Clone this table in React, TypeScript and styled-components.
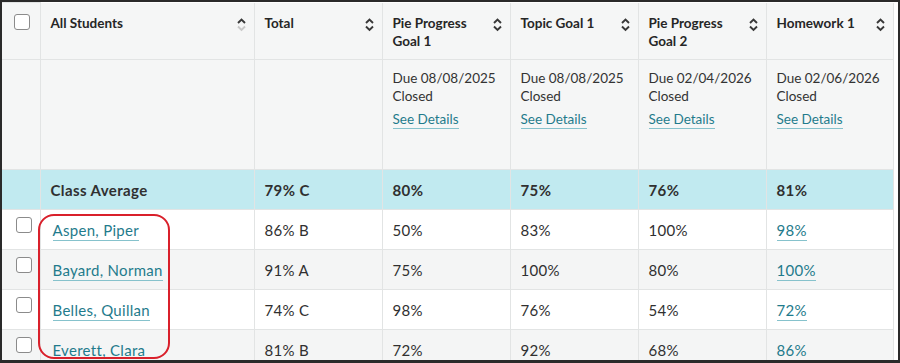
import React from 'react';
import styled, { createGlobalStyle } from 'styled-components';

const GlobalStyle = createGlobalStyle`
  body {
    margin: 0;
    background: #ffffff;
    font-family: Lato, "Open Sans", Arial, sans-serif;
    color: #2b2b2b;
  }
`;

const Frame = styled.div`
  position: relative;
  width: 900px;
  height: 363px;
  box-sizing: border-box;
  border: 2px solid #2a2a2a;
  border-bottom-width: 3px;
  overflow: hidden;
  background: #ffffff;
`;

const Table = styled.table`
  width: 891px;
  table-layout: fixed;
  border-collapse: collapse;
  font-size: 13.5px;
  line-height: 18px;
`;

const HeadRow = styled.tr<{ height: number }>`
  height: ${p => p.height}px;
  background: #f5f6f6;
`;

const BodyRow = styled.tr<{ tone: 'white' | 'grey' | 'average' }>`
  height: 40px;
  background: ${p => (p.tone === 'average' ? '#c1eaf0' : p.tone === 'grey' ? '#f4f5f5' : '#ffffff')};
  font-weight: ${p => (p.tone === 'average' ? 700 : 400)};
  font-size: 15px;
  letter-spacing: ${p => (p.tone === 'average' ? '0.4px' : '0.3px')};
  color: #303030;
`;

const HeadCell = styled.th`
  padding: 11px 8px 0 10px;
  vertical-align: top;
  text-align: left;
  font-weight: 700;
  border: 1px solid #e2e4e4;
  border-top: none;
`;

const InfoCell = styled.td`
  padding: 9px 10px 0;
  vertical-align: top;
  border: 1px solid #e2e4e4;
  white-space: nowrap;
`;

const Cell = styled.td<{ inset?: number }>`
  padding: 0 10px 0 ${p => p.inset ?? 10}px;
  vertical-align: middle;
  border: 1px solid #e2e4e4;
  white-space: nowrap;
`;

const BoxCell = styled.td<{ offset: number; top: number }>`
  padding: ${p => p.top}px 0 0 ${p => p.offset}px;
  vertical-align: top;
  border: 1px solid #e2e4e4;
  border-left: none;
`;

const HeadInner = styled.div`
  display: flex;
  justify-content: space-between;
  align-items: flex-start;
  gap: 6px;
`;

const Title = styled.span`
  max-width: 96px;
  color: #262626;
`;

const SortIcon = styled.svg`
  flex: none;
  margin-top: 3px;
`;

const Checkbox = styled.div`
  width: 16px;
  height: 16px;
  box-sizing: border-box;
  border: 1.5px solid #8b8b8b;
  border-radius: 3px;
  background: #ffffff;
`;

const Link = styled.a`
  color: #1f7b8c;
  text-decoration: none;
  border-bottom: 1px solid #86c2cc;
  padding-bottom: 1px;
`;

const DueLine = styled.div`
  color: #333333;
`;

const DetailsLine = styled.div`
  margin-top: 5px;
`;

const Highlight = styled.div`
  position: absolute;
  left: 36px;
  top: 212px;
  width: 132px;
  height: 145px;
  box-sizing: border-box;
  border: 2px solid #d9202b;
  border-radius: 16px;
  pointer-events: none;
`;

const Sort = ({ active }: { active?: boolean }) => (
  <SortIcon width="9" height="15" viewBox="0 0 9 15">
    <path d="M1 6 L4.5 2.5 L8 6" fill="none" stroke="#383838" strokeWidth="1.9" />
    <path d="M1 9.5 L4.5 13 L8 9.5" fill="none" stroke={active ? '#c8c8c8' : '#383838'} strokeWidth="1.9" />
  </SortIcon>
);

const assignments = [
  { title: 'Pie Progress Goal 1', due: '08/08/2025', avg: '80%' },
  { title: 'Topic Goal 1', due: '08/08/2025', avg: '75%' },
  { title: 'Pie Progress Goal 2', due: '02/04/2026', avg: '76%' },
  { title: 'Homework 1', due: '02/06/2026', avg: '81%' },
];

const students = [
  { name: 'Aspen, Piper', total: '86% B', scores: ['50%', '83%', '100%', '98%'] },
  { name: 'Bayard, Norman', total: '91% A', scores: ['75%', '100%', '80%', '100%'] },
  { name: 'Belles, Quillan', total: '74% C', scores: ['98%', '76%', '54%', '72%'] },
  { name: 'Everett, Clara', total: '81% B', scores: ['72%', '92%', '68%', '86%'] },
];

export default function App() {
  return (
    <>
      <GlobalStyle />
      <Frame>
        <Table>
          <colgroup>
            <col style={{ width: 38 }} />
            <col style={{ width: 214 }} />
            <col style={{ width: 128 }} />
            <col style={{ width: 128 }} />
            <col style={{ width: 128 }} />
            <col style={{ width: 128 }} />
            <col style={{ width: 127 }} />
          </colgroup>
          <thead>
            <HeadRow height={57}>
              <BoxCell as="th" offset={12} top={11}>
                <Checkbox />
              </BoxCell>
              <HeadCell>
                <HeadInner>
                  <Title>All Students</Title>
                  <Sort active />
                </HeadInner>
              </HeadCell>
              <HeadCell>
                <HeadInner>
                  <Title>Total</Title>
                  <Sort />
                </HeadInner>
              </HeadCell>
              {assignments.map(a => (
                <HeadCell key={a.title}>
                  <HeadInner>
                    <Title>{a.title}</Title>
                    <Sort />
                  </HeadInner>
                </HeadCell>
              ))}
            </HeadRow>
            <HeadRow height={110}>
              <BoxCell as="th" offset={0} top={0} />
              <InfoCell />
              <InfoCell />
              {assignments.map(a => (
                <InfoCell key={a.title}>
                  <DueLine>Due {a.due}</DueLine>
                  <DueLine>Closed</DueLine>
                  <DetailsLine>
                    <Link>See Details</Link>
                  </DetailsLine>
                </InfoCell>
              ))}
            </HeadRow>
          </thead>
          <tbody>
            <BodyRow tone="average">
              <BoxCell offset={0} top={0} />
              <Cell>Class Average</Cell>
              <Cell>79% C</Cell>
              {assignments.map(a => (
                <Cell key={a.title}>{a.avg}</Cell>
              ))}
            </BodyRow>
            {students.map((s, i) => (
              <BodyRow key={s.name} tone={i % 2 === 0 ? 'white' : 'grey'}>
                <BoxCell offset={14} top={7}>
                  <Checkbox />
                </BoxCell>
                <Cell inset={12}>
                  <Link>{s.name}</Link>
                </Cell>
                <Cell>{s.total}</Cell>
                {s.scores.map((v, j) => (
                  <Cell key={j}>{j === 3 ? <Link>{v}</Link> : v}</Cell>
                ))}
              </BodyRow>
            ))}
          </tbody>
        </Table>
        <Highlight />
      </Frame>
    </>
  );
}
